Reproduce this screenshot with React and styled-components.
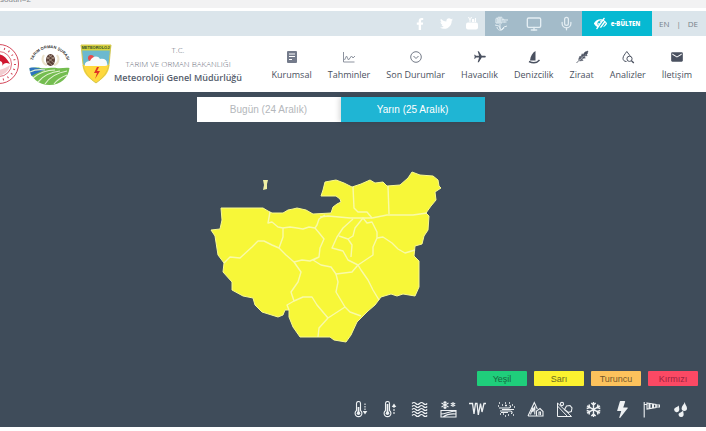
import React from 'react';
import styled, { createGlobalStyle } from 'styled-components';
import { FaFacebookF, FaTwitter, FaLowVision } from 'react-icons/fa';
import { MdEmail, MdFlight } from 'react-icons/md';
import { BsLightningFill } from 'react-icons/bs';
import { LuMic, LuMonitor } from 'react-icons/lu';

const menu = [
	{ texto: 'Kurumsal', icono: 'kurumsal' },
	{ texto: 'Tahminler', icono: 'tahminler' },
	{ texto: 'Son Durumlar', icono: 'durumlar' },
	{ texto: 'Havacılık', icono: 'havacilik' },
	{ texto: 'Denizcilik', icono: 'denizcilik' },
	{ texto: 'Ziraat', icono: 'ziraat' },
	{ texto: 'Analizler', icono: 'analizler' },
	{ texto: 'İletişim', icono: 'iletisim' },
];

const niveles = [
	{ texto: 'Yeşil', fondo: '#1fce7b', color: '#17683f' },
	{ texto: 'Sarı', fondo: '#fcf22f', color: '#6b6a22' },
	{ texto: 'Turuncu', fondo: '#fdc25c', color: '#76592e' },
	{ texto: 'Kırmızı', fondo: '#fb4964', color: '#9c2440' },
];

const eventos = [
	['sicaklik-dusuk', 'Soğuk'],
	['sicaklik-yuksek', 'Sıcak'],
	['sel', 'Sel'],
	['kar-erimesi', 'Kar erimesi'],
	['buzlanma', 'Buzlanma'],
	['toz', 'Toz'],
	['cig', 'Çığ'],
	['heyelan', 'Heyelan'],
	['kar', 'Kar'],
	['firtina', 'Gökgürültülü fırtına'],
	['ruzgar', 'Rüzgar'],
	['yagmur', 'Yağmur'],
];

const IconoMenu = ({ tipo }) => {
	if (tipo === 'havacilik') return <Avion />;
	if (tipo === 'iletisim') return <MdEmail size={14} />;
	return (
		<svg width="14" height="14" viewBox="0 0 14 14" fill="none" stroke="currentColor">
			{tipo === 'kurumsal' && (
				<>
					<rect x="2" y="1" width="10" height="12" rx="1" fill="#747b8b" stroke="none" />
					<path d="M4 4h6M4 6.5h6M4 9.5h3" stroke="#fff" />
				</>
			)}
			{tipo === 'tahminler' && (
				<path d="M1.5 2v10h11M2.5 10l2-4 2 4 3-4 1.5 2 2-2" stroke="#8d939f" />
			)}
			{tipo === 'durumlar' && (
				<>
					<circle cx="7" cy="7" r="5.3" stroke="#747b88" />
					<path d="M4.5 6L7 8.5 9.5 6" stroke="#747b88" />
				</>
			)}
			{tipo === 'denizcilik' && (
				<>
					<path d="M8.5 1v9.5H3C3.500 6 5.500 2.500 8.500 1z" fill="currentColor" stroke="none" />
					<path d="M2 11.500c4 2 8 1.500 10.500-1.500" strokeWidth="1.4" />
				</>
			)}
			{tipo === 'ziraat' && (
				<>
					<path d="M1.5 13L12.5 1.5" strokeWidth=".8" />
					<path
						d="M3.500 9.500L5 6l1.200 2zM5.700 7L7.200 3.700l1.200 2zM8 4.700L10 2l3-1-.8 3-2.500 2.200zM4.500 11l3.700-.7L6.500 9zM6.800 8.600l3.600-.7-1.700-1.400zM9 6.300l3.300-.8L11 4.300z"
						fill="currentColor"
						strokeWidth=".5"
					/>
				</>
			)}
			{tipo === 'analizler' && (
				<>
					<path d="M5.500 11.500C3 11.500 2 10 2 8.300 2 6.300 4 4 5.800 1.500c1.500 2 2.800 3.500 3.400 4.800" />
					<circle cx="8.5" cy="8.8" r="2.6" />
					<path d="M10.500 10.800l2.300 2.200" strokeWidth="1.3" />
				</>
			)}
		</svg>
	);
};

const IconoEvento = ({ tipo, titulo }) => {
	if (tipo === 'firtina') return <BsLightningFill size={17} title={titulo} />;
	return (
		<svg
			width="17"
			height="17"
			viewBox="0 0 17 17"
			fill="none"
			stroke="currentColor"
			strokeWidth="1.1"
			role="img"
			aria-label={titulo}
		>
			{tipo.startsWith('sicaklik') && (
				<>
					<path d="M3.500 9.500v-7a2 2 0 0 1 4 0v7a3.400 3.400 0 1 1-4 0z" />
					<circle cx="5.5" cy="12.3" r="1.7" fill="currentColor" stroke="none" />
					<path d={tipo === 'sicaklik-dusuk' ? 'M5.5 6v6' : 'M5.5 3v9'} strokeWidth="1.8" />
				</>
			)}
			{tipo === 'sicaklik-dusuk' && (
				<>
					<path d="M12 2.500v8" strokeDasharray="1.5 1" />
					<path d="M9.700 10h4.600L12 13.500z" fill="currentColor" stroke="none" />
				</>
			)}
			{tipo === 'sicaklik-yuksek' && (
				<>
					<path d="M12 5v9" strokeDasharray="2 1" />
					<path d="M9.700 6h4.600L12 2.500z" fill="currentColor" stroke="none" />
				</>
			)}
			{tipo === 'sel' &&
				[2, 5, 8, 11, 14].map((y) => (
					<path key={y} d={`M1 ${y + 0.5}q1.900-2 3.800 0t3.800 0 3.800 0 3.800 0`} />
				))}
			{tipo === 'kar-erimesi' && (
				<>
					<path d="M5 0v8M1.500 2l7 4M8.500 2l-7 4M3.500 1L5 2l1.500-1M3.500 7L5 6l1.500 1M13 1v5M10.800 2.300l4.400 2.500M15.200 2.300l-4.400 2.500" />
					<path d="M1 9.500h15v6.500H1zM1 13c5 0 8-3 15-3M3 16c4-3 8-3.500 13-3" />
				</>
			)}
			{tipo === 'buzlanma' && (
				<path
					d="M0 2.500h3.500L5 13 6.500 2.500H8L9.300 14l2.200-11.500L13 11l2-8.500h2"
					strokeWidth="1.3"
				/>
			)}
			{tipo === 'toz' && (
				<>
					<path d="M1 7h10c2 0 2-2.500.5-2.500M2 10h10.500c2 0 2 2.500.5 2.500M4 8.500h12M3 11.500h7" />
					<path
						d="M1 2h1M4 4h1M7 2h1M11 2h1M14 4h1M16 6h1M2 13h1M5 13h1M7 15h1M10 14h1M15 14h1M7 4.500h2M0 5h1"
						strokeWidth="1.4"
					/>
				</>
			)}
			{tipo === 'cig' && (
				<>
					<path d="M1 15L7.300 1.500l3 6.500M1 15h15V10.500L13 7.500 9.500 10v5" />
					<path d="M3.500 13.500l2.300-7v4.500l2-5.500v8M12 14v-3h1.500v3" />
				</>
			)}
			{tipo === 'heyelan' && (
				<>
					<path d="M1.500 2v13.500h14zM1.500 5l10 10.500" strokeWidth="1" />
					<circle cx="6" cy="3" r="1.6" />
					<path d="M8.500 8.500L10.500 5l3.500-.5 2 2.500-.7 3.500-3 1z" />
				</>
			)}
			{tipo === 'kar' && (
				<path
					d="M8.500 1v15M2 4.800l13 7.400M15 4.800L2 12.200M6.300 2l2.200 2 2.200-2M6.300 15l2.200-2 2.200 2M1.700 7.500l3-1-.7-3M15.300 9.500l-3 1 .7 3M1.700 9.500l3 1-.7 3M15.300 7.500l-3-1 .7-3"
					strokeWidth="1.4"
				/>
			)}
			{tipo === 'ruzgar' && (
				<>
					<path d="M1.200 1v15.500M1 3.500h3" />
					<path d="M4 2l9 1.500v3L4 8z" />
					<path d="M6.500 2.400v5.200M10 3v4" strokeWidth="2" />
					<path d="M13 4h3.500v2H13z" />
				</>
			)}
			{tipo === 'yagmur' && (
				<g fill="currentColor" stroke="none">
					<path d="M12.700 1c.5 3 2.300 4 2.300 6.300a2.700 2.700 0 0 1-5.400 0c.2-2.700 2.600-3.700 3.100-6.300z" />
					<path d="M6.800 4.500c0 2 .9 3.200.4 4.800a2.600 2.600 0 0 1-5.100-.7C2.400 6.300 5.500 6.300 6.800 4.500z" />
					<path d="M11.200 9.500c-.2 2 .9 3.200.3 5a2.600 2.600 0 0 1-5-.9c.4-2.200 3.600-2.300 4.700-4.100z" />
				</g>
			)}
		</svg>
	);
};

const LogoBakanlik = () => (
	<svg width="20" height="42" viewBox="21 0 20 42" fill="none" stroke="#d4475a">
		<circle cx="20" cy="21" r="19.5" />
		<circle cx="20" cy="21" r="16" strokeWidth="2" strokeDasharray="1 4" />
		<circle cx="20" cy="21" r="12.5" strokeWidth=".8" />
		<path d="M12 15c6-7 14-4 19 6-4-2-6-1-8 2 2-5-3-7-11-3z" fill="#cf1730" stroke="none" />
		<path d="M20 27c4-1 7-2 11-5-1 5-4 9-11 11z" fill="#f3cdd1" stroke="none" />
	</svg>
);

const LogoSura = () => (
	<svg width="44" height="42" viewBox="0 0 44 42">
		<path id="arco" d="M4 23A18 18 0 0 1 40 23" fill="none" />
		<text fontFamily="Liberation Sans" fontWeight="700" fontSize="4" fill="#333">
			<textPath href="#arco" startOffset="50%" textAnchor="middle">
				TARIM ORMAN ŞURASI
			</textPath>
		</text>
		<path d="M16 12c-3 4-1 9 3 10M29 12c3 4 1 9-3 10" stroke="#ece2ca" strokeWidth="2" fill="none" />
		<ellipse cx="22.5" cy="17" rx="4.5" ry="6" fill="#5c4038" />
		<path d="M19 14l7 6M19 18l5 4M26 14l-7 6M21 12l5 4M24 12l-5 4" stroke="#c9b9a4" strokeWidth=".6" />
		<path d="M1.500 25c4 0 7-1 11 0s12-1 16 0 9-1 13 0c-1 10-9 17-20 17S2.500 35 1.500 25z" fill="#74bd50" />
		<path d="M1.500 25c5-1 9 0 16 2-5 1-10 4-14 6-1-2-2-5-2-8z" fill="#2d73bd" />
		<path
			d="M2 29c4-2 8-3 15-2M5 35c6-5 12-8 22-8M10 39c5-6 12-10 22-11M17 41c4-6 11-11 22-13M26 41c3-4 8-7 13-9"
			fill="none"
			stroke="#e2f2d3"
			strokeWidth="1.2"
		/>
	</svg>
);

const LogoMeteoroloji = () => (
	<svg width="32" height="40" viewBox="0 0 32 40">
		<path d="M1 1h30c-1 6-1 12-2 19-1 8-6 14-13 19C9 34 4 28 3 20 2 13 2 7 1 1z" fill="#6bb9cf" />
		<path d="M2.500 21h27C29 29 24 34 16 39 8 34 3 29 2.500 21z" fill="#ffd83d" />
		<path d="M1 1h30l-.6 5.500H1.600z" fill="#d8d43c" />
		<text x="16" y="5" textAnchor="middle" fontFamily="Liberation Sans" fontWeight="700" fontSize="4" fill="#314d2d">
			METEOROLOJİ
		</text>
		<circle cx="11" cy="14" r="3" fill="#e84a4a" />
		<path d="M5 22c-1-4 3-5 5-5 2-5 8-6 10-2 4-1 7 1 7 4 1 2 0 3-2 3z" fill="#f8fbfc" />
		<path d="M17 23l-3 6h3l-2 6 5-8h-3l2-4z" fill="#df3325" />
		<path d="M1 1h30c-1 6-1 12-2 19-1 8-6 14-13 19C9 34 4 28 3 20 2 13 2 7 1 1z" fill="none" stroke="#d7c84c" />
	</svg>
);

const contorno =
	'M221 208L263 208 268 211 272 213 283 213 288 210 293 209 297 208 306 210 313 214 331 213 333 207 337 204 341 202 340 199 336 196 321 196 323 190 325 182 336 180 344 183 352 187 361 184 370 180 375 183 383 182 387 186 400 185 408 178 412 172 420 175 433 176 438 180 439 186 441 188 435 192 436 200 431 206 426 213 429 216 428 230 424 236 422 244 415 246 414 256 419 261 419 287 415 296 403 294 397 296 391 294 381 297 375 305 368 311 357 322 351 335 346 342 334 340 330 337 300 337 293 327 289 317 289 310 285 310 283 315 278 317 262 312 255 305 253 298 243 296 232 290 232 282 223 272 224 263 218 255 215 236 211 230 220 229 222 220z';

const limites = [
	'M270 212L268 223 272 222 278 227 283 228 283 237 279 248 286 255 294 262 301 272 298 282 291 292 294 301 287 305 289 310',
	'M279 248L272 245 264 241 258 241 252 247 240 258 230 257 224 263',
	'M283 228L290 227 297 228 303 229 309 227 315 228 317 225 319 219 325 215',
	'M315 228L320 234 324 239 320 248 319 257 310 261 302 260 294 262M319 257L313 260 321 265 331 267 336 274 352 272 358 265',
	'M294 301L303 297 312 297 317 305 328 318 319 328 318 337M328 318L345 307',
	'M353 187L354 208 358 212 367 212 372 218',
	'M388 186L389 214',
	'M320 217L328 216 350 218 372 218 387 215 413 215 427 213',
	'M353 219L343 228 337 237 332 248 343 251 348 260 358 265',
	'M339 236L348 239 353 236 355 228 363 218 367 223 372 222 377 232 377 238 373 247 373 255 358 265',
	'M348 239L352 245 351 257',
	'M377 238L383 237 392 243 398 249 405 253 415 250',
	'M358 265L361 270 368 280 373 290 379 300',
	'M336 274L338 282 336 292 345 307 350 312 361 316',
];

const Mapa = () => (
	<svg width="301" height="185" viewBox="190 165 301 185" role="img" aria-label="Uyarı haritası">
		<path d={contorno} fill="#f7f738" stroke="#f9f98f" strokeWidth="1" strokeLinejoin="round" />
		<path d="M263 180h5l-1 4v5l-4 1 1-5z" fill="#f0f0a4" />
		<g fill="none" stroke="#f9faa8" strokeWidth="1.4" strokeLinejoin="round">
			{limites.map((d) => (
				<path key={d} d={d} />
			))}
		</g>
	</svg>
);

const App = () => {
	return (
		<>
			<Global />
			<Direccion>
				<span>sodun=2</span>
			</Direccion>
			<BarraSuperior>
				<Redes>
					<a href="#facebook" aria-label="Facebook">
						<FaFacebookF size={12} />
					</a>
					<a href="#twitter" aria-label="Twitter">
						<FaTwitter size={13} />
					</a>
					<a href="#youtube" aria-label="YouTube">
						<svg width="12" height="13" viewBox="0 0 12 13" fill="currentColor">
							<path d="M2 0l1.500 3v2h1V3L6 0H5L4 2 3 0zM6 2h2v3H6zM9 1h1v4H8.500z" />
							<rect x="0" y="5.5" width="12" height="7" rx="2" />
						</svg>
					</a>
				</Redes>
				<Accesos>
					<a href="#isaret" aria-label="İşaret dili">
						<svg width="16" height="16" viewBox="0 0 16 16" fill="none" stroke="currentColor">
							<path d="M3 7V3a1 1 0 0 1 2 0v4M5 6V2a1 1 0 0 1 2 0v5M7 6V2a1 1 0 0 1 2 0v5M3 7h6M9 4l2-1v4M11.500 4H15M11.500 6h2M2 9l4 1 2 4 3-3 3-1M4 11c0 3.500 5 4.500 7 1M7 8v5" />
						</svg>
					</a>
					<a href="#ekran" aria-label="Ekran">
						<LuMonitor size={16} />
					</a>
					<a href="#ses" aria-label="Ses">
						<LuMic size={15} />
					</a>
				</Accesos>
				<Bulten href="#bulten">
					<Ojo />
					e-BÜLTEN
				</Bulten>
				<Idiomas>
					<a href="#en">EN</a>
					<span>|</span>
					<a href="#de">DE</a>
				</Idiomas>
			</BarraSuperior>

			<Encabezado>
				<Logos>
					<LogoBakanlik />
					<LogoSura />
					<LogoMeteoroloji />
				</Logos>
				<Institucion>
					<span>T.C.</span>
					<span>TARIM VE ORMAN BAKANLIĞI</span>
					<strong>Meteoroloji Genel Müdürlüğü</strong>
				</Institucion>
				<Menu>
					{menu.map(({ texto, icono }) => (
						<a href={`#${icono}`} key={icono}>
							<IconoMenu tipo={icono} />
							{texto}
						</a>
					))}
				</Menu>
			</Encabezado>

			<Panel>
				<Escenario>
					<Pestanas>
						<Pestana>Bugün (24 Aralık)</Pestana>
						<Pestana $activa>Yarın (25 Aralık)</Pestana>
					</Pestanas>
					<Mapa />
				</Escenario>
				<Leyenda>
					{niveles.map(({ texto, fondo, color }) => (
						<Nivel key={texto} $fondo={fondo} $color={color}>
							{texto}
						</Nivel>
					))}
				</Leyenda>
				<Eventos>
					{eventos.map(([tipo, titulo]) => (
						<IconoEvento key={tipo} tipo={tipo} titulo={titulo} />
					))}
				</Eventos>
			</Panel>
		</>
	);
};

export default App;

const Global = createGlobalStyle`
	* {
		box-sizing: border-box;
	}
	body {
		margin: 0;
		background: #fff;
		font-family: 'Open Sans', sans-serif;
	}
	a {
		color: inherit;
		text-decoration: none;
	}
	svg {
		display: block;
		flex-shrink: 0;
	}
`;

/* solo asoma la parte baja del texto */
const Direccion = styled.div`
	display: flex;
	align-items: flex-end;
	height: 8px;
	margin-bottom: 3px;
	overflow: hidden;
	background: #f2f2f3;
	color: #85888c;
	font-family: 'Liberation Sans', sans-serif;
	font-size: 8px;
	line-height: 12px;

	span {
		padding-bottom: 2px;
	}
`;

const BarraSuperior = styled.div`
	display: flex;
	justify-content: flex-end;
	height: 25px;
	background: #dbe5eb;
`;

const Redes = styled.div`
	display: flex;
	align-items: center;
	color: #fff;

	a {
		display: flex;
		justify-content: center;
		width: 26px;
	}
`;

const Accesos = styled.div`
	display: flex;
	align-items: center;
	justify-content: space-around;
	width: 97px;
	background: #a3bbc9;
	color: #e4eef3;
`;

const Bulten = styled.a`
	display: flex;
	align-items: center;
	justify-content: center;
	gap: 4px;
	width: 70px;
	background: #06b9d2;
	color: #fff;
	font-size: 6px;
	font-weight: 800;
`;

const Ojo = styled(FaLowVision).attrs({ size: 13 })`
	transform: scaleX(-1);
`;

const Idiomas = styled.div`
	display: flex;
	align-items: center;
	justify-content: space-between;
	width: 54px;
	padding: 0 8px 0 7px;
	color: #77818a;
	font-size: 8px;
`;

const Encabezado = styled.header`
	display: flex;
	align-items: center;
	height: 56px;
	background: #fff;
`;

const Logos = styled.div`
	display: flex;
	align-items: center;
	gap: 8px;
`;

const Institucion = styled.div`
	display: flex;
	flex-direction: column;
	align-items: center;
	margin-left: 2px;
	color: #666c78;
	font-size: 8px;
	font-weight: 300;
	line-height: 14px;
	white-space: nowrap;

	strong {
		color: #555d6c;
		font-size: 9px;
		font-weight: 600;
	}
`;

const Menu = styled.nav`
	display: flex;
	flex: 1;
	justify-content: flex-end;
	gap: 16px;
	padding: 4px 14px 0 0;
	color: #4a5160;
	font-size: 9px;
	line-height: 14px;
	white-space: nowrap;

	a {
		display: flex;
		flex-direction: column;
		align-items: center;
		gap: 4px;
	}
`;

const Avion = styled(MdFlight).attrs({ size: 14 })`
	transform: rotate(90deg);
`;

const Panel = styled.main`
	padding: 5px 0 9px;
	background: #3f4c5a;
`;

const Escenario = styled.section`
	display: flex;
	flex-direction: column;
	align-items: center;
	gap: 43px;
	padding-right: 25px;
`;

const Pestanas = styled.div`
	display: flex;
	background: #fff;
`;

const Pestana = styled.button`
	width: 144px;
	height: 25px;
	padding: 0;
	border: none;
	background: ${(props) => (props.$activa ? '#1fb5d4' : '#fff')};
	box-shadow: ${(props) => (props.$activa ? '-2px 0 5px rgba(0,0,0,.15)' : 'none')};
	color: ${(props) => (props.$activa ? '#fff' : '#b4b7bb')};
	font-family: 'Liberation Sans', sans-serif;
	font-size: 10px;
	cursor: pointer;
`;

const Leyenda = styled.div`
	display: flex;
	justify-content: flex-end;
	gap: 7px;
	margin-top: 21px;
	padding-right: 8px;
`;

const Nivel = styled.button`
	width: 50px;
	height: 15px;
	padding: 0;
	border: none;
	border-radius: 1px;
	background: ${(props) => props.$fondo};
	color: ${(props) => props.$color};
	font-family: 'Liberation Sans', sans-serif;
	font-size: 9px;
	cursor: pointer;
`;

const Eventos = styled.div`
	display: flex;
	justify-content: flex-end;
	gap: 12px;
	margin-top: 15px;
	padding-right: 17px;
	color: #eef1f3;
`;
